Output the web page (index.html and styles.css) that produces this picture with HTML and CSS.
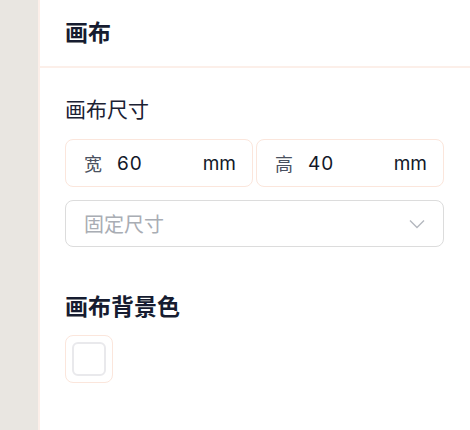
FILE: index.html
```html
<!DOCTYPE html>
<html lang="zh">
<head>
<meta charset="utf-8">
<link rel="stylesheet" href="styles.css">
</head>
<body>
<div class="app">
  <aside class="rail"></aside>
  <main class="panel">
    <div class="panel-head">画布</div>
    <div class="panel-body">
      <div class="label">画布尺寸</div>
      <div class="size-row">
        <div class="num-input"><span class="prefix">宽</span><span class="value">60</span><span class="unit">mm</span></div>
        <div class="num-input"><span class="prefix">高</span><span class="value">40</span><span class="unit">mm</span></div>
      </div>
      <div class="select">
        <span class="placeholder">固定尺寸</span>
        <svg class="chevron" width="16" height="10" viewBox="0 0 16 10"><path d="M1 1.5 L8 8.5 L15 1.5" fill="none" stroke="#b4b8bf" stroke-width="1.4"/></svg>
      </div>
      <div class="sub-title">画布背景色</div>
      <div class="swatch"><div class="swatch-inner"></div></div>
    </div>
  </main>
</div>
</body>
</html>
```

FILE: styles.css
```css
html, body {
  margin: 0;
  padding: 0;
  background: #ffffff;
}
body {
  font-family: "Inter", "Noto Sans CJK SC", sans-serif;
  color: #141a2e;
}
.app {
  display: flex;
  height: 430px;
  width: 470px;
  overflow: hidden;
}
.rail {
  width: 38px;
  flex: none;
  background: #e9e6e1;
  border-right: 2px solid #fcefe9;
}
.panel {
  flex: 1;
  background: #fff;
}
.panel-head {
  height: 62px;
  padding-bottom: 4px;
  border-bottom: 2px solid #fcefe9;
  display: flex;
  align-items: center;
  padding-left: 25px;
  font-family: "Noto Sans CJK SC", sans-serif;
  font-weight: 700;
  font-size: 23px;
  color: #161c30;
}
.panel-body {
  padding: 28px 26px 0 25px;
}
.label {
  font-family: "Noto Sans CJK SC", sans-serif;
  font-size: 21px;
  line-height: 24px;
  color: #1b2133;
}
.size-row {
  display: flex;
  gap: 3px;
  margin-top: 19px;
}
.num-input {
  flex: 1;
  height: 46px;
  border: 1px solid #fbe6dc;
  border-radius: 8px;
  display: flex;
  align-items: center;
  padding: 0 16px 0 18px;
}
.prefix {
  font-family: "Noto Sans CJK SC", sans-serif;
  font-size: 18px;
  color: #4a5160;
  margin-right: 15px;
}
.value {
  flex: 1;
  font-size: 19px;
  letter-spacing: 1px;
  color: #121829;
}
.unit {
  font-size: 19px;
  color: #121829;
}
.select {
  margin-top: 13px;
  height: 45px;
  border: 1px solid #dcdcdc;
  border-radius: 8px;
  display: flex;
  align-items: center;
  justify-content: space-between;
  padding: 0 18px 0 18px;
}
.placeholder {
  font-family: "Noto Sans CJK SC", sans-serif;
  font-size: 20px;
  color: #a9adb4;
}
.sub-title {
  margin-top: 45px;
  font-family: "Noto Sans CJK SC", sans-serif;
  font-weight: 700;
  font-size: 23px;
  line-height: 26px;
  color: #161c30;
}
.swatch {
  margin-top: 17px;
  width: 46px;
  height: 46px;
  border: 1px solid #fbe6dc;
  border-radius: 8px;
  display: flex;
  align-items: center;
  justify-content: center;
}
.swatch-inner {
  width: 34px;
  height: 34px;
  border: 2px solid #e9e9ec;
  border-radius: 6px;
  box-sizing: border-box;
  background: #fff;
}
```
